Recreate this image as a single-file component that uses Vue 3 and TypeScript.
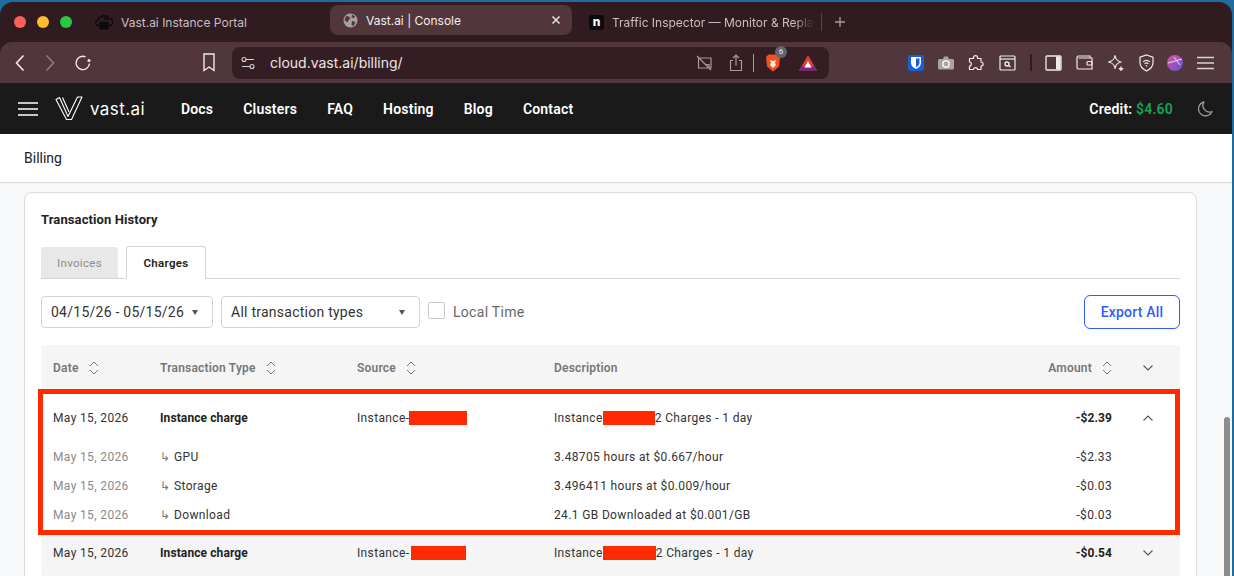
<script setup lang="ts">
const navLinks = ['Docs', 'Clusters', 'FAQ', 'Hosting', 'Blog', 'Contact']

const columns = [
  { label: 'Date', sort: true },
  { label: 'Transaction Type', sort: true },
  { label: 'Source', sort: true },
  { label: 'Description', sort: false },
]

const subRows = [
  { name: 'GPU', text: '3.48705 hours at $0.667/hour', amount: '-$2.33' },
  { name: 'Storage', text: '3.496411 hours at $0.009/hour', amount: '-$0.03' },
  { name: 'Download', text: '24.1 GB Downloaded at $0.001/GB', amount: '-$0.03' },
]
</script>

<template>
  <div class="window">
    <div class="chrome">
      <div class="tabstrip">
        <div class="lights">
          <span class="light red"></span>
          <span class="light yellow"></span>
          <span class="light green"></span>
        </div>
        <div class="tab tab-first">
          <svg width="18" height="16" viewBox="0 0 18 16" fill="none" stroke="#0c0a0b" stroke-width="1.4">
            <path d="M4 11.5H3a2.6 2.6 0 0 1-.3-5.1A4 4 0 0 1 6.3 3 4.8 4.8 0 0 1 14 4.8a3.3 3.3 0 0 1 1 6.7h-1" />
            <circle cx="11.2" cy="3.6" r="1.5" fill="#2f1b20" />
            <path d="M5 8.5h8v6.2H5z" fill="#0c0a0b" />
          </svg>
          <span>Vast.ai Instance Portal</span>
        </div>
        <div class="tab tab-active">
          <svg width="15" height="15" viewBox="0 0 15 15">
            <circle cx="7.5" cy="7.5" r="7" fill="#a7a0a2" />
            <path d="M3 3l3 .5 1.5 2-2 1.5-1 2.5-3-2.500zM9 1.500l3 2-1.500 2L8.500 4zM9 8l3.500 1-2 4-2-1z" fill="#51373b" />
          </svg>
          <span class="tab-title">Vast.ai | Console</span>
          <svg class="tab-close" width="10" height="10" viewBox="0 0 10 10" stroke="#e8e2e3" stroke-width="1.5">
            <path d="M1.500 1.500l7 7M8.500 1.500l-7 7" />
          </svg>
        </div>
        <div class="tab tab-third">
          <span class="notion">n</span>
          <span class="tab-fade">Traffic Inspector — Monitor &amp; Repla</span>
        </div>
        <span class="tab-divider"></span>
        <svg class="tab-plus" width="12" height="12" viewBox="0 0 12 12" stroke="#a89c9f" stroke-width="1.3">
          <path d="M6 1v10M1 6h10" />
        </svg>
      </div>

      <div class="toolbar">
        <div class="tool-left">
          <svg width="12" height="18" viewBox="0 0 12 18" fill="none" stroke="#f0ecec" stroke-width="1.6">
            <path d="M9.500 1.500L2.500 9l7 7.500" />
          </svg>
          <svg width="12" height="18" viewBox="0 0 12 18" fill="none" stroke="#8d7d80" stroke-width="1.6">
            <path d="M2.500 1.500L9.500 9l-7 7.500" />
          </svg>
          <svg width="18" height="18" viewBox="0 0 18 18" fill="none" stroke="#f0ecec" stroke-width="1.4">
            <path d="M15.500 9.500A6.700 6.700 0 1 1 11.500 2.800" />
            <circle cx="15" cy="6.500" r="1.500" fill="#f0ecec" stroke="none" />
          </svg>
        </div>
        <svg class="bookmark" width="12" height="19" viewBox="0 0 12 19" fill="none" stroke="#f0ecec" stroke-width="1.4">
          <path d="M1 1h10v16.500L6 14l-5 3.500z" />
        </svg>
        <div class="urlbar">
          <svg width="14" height="14" viewBox="0 0 14 14" fill="none" stroke="#d8d0d2" stroke-width="1.1">
            <path d="M5 3.500h8M1 10.500h8" />
            <circle cx="3" cy="3.500" r="2" />
            <circle cx="11" cy="10.500" r="2" />
          </svg>
          <span class="url">cloud.vast.ai/billing/</span>
          <div class="url-icons">
            <svg width="16" height="16" viewBox="0 0 16 16" fill="none" stroke="#a69a9c" stroke-width="1.2">
              <path d="M3 3h12v10H2.500V3.500M10 9.500h3V13M1 1l14 14" />
            </svg>
            <svg class="share" width="14" height="18" viewBox="0 0 14 18" fill="none" stroke="#a69a9c" stroke-width="1.2">
              <path d="M4 6.500H1.500v10h11v-10H10M7 11.500V1.500M4 4l3-3 3 3" />
            </svg>
            <span class="url-sep"></span>
            <div class="brave">
              <svg width="14" height="18" viewBox="0 0 14 18">
                <path d="M2.500.5h9L14 3l-1 9.500L7 17.500 1 12.500 0 3z" fill="#f1501f" />
                <path d="M4 6l3 1 3-1-1 3 1 2-3 3-3-3 1-2z" fill="#fbe5dc" />
              </svg>
              <span class="badge">6</span>
            </div>
            <svg width="18" height="16" viewBox="0 0 18 16">
              <path d="M9 0l9 15.500H0z" fill="#e33d2a" />
              <path d="M0 15.500l3-5 3 2 6 0 3-2 3 5z" fill="#6a2b8c" />
              <path d="M9 6l3.500 6.500h-7z" fill="#fff" />
            </svg>
          </div>
        </div>
        <div class="extensions">
          <span class="bitwarden">
            <svg width="10" height="12" viewBox="0 0 10 12">
              <path d="M0 0h10v6c0 3-2.500 4.800-5 6-2.500-1.200-5-3-5-6z" fill="#fff" />
              <path d="M5 1.500h3.500V6c0 2-1.800 3.200-3.500 4.200z" fill="#175ddc" />
            </svg>
          </span>
          <svg width="16" height="14" viewBox="0 0 16 14">
            <path d="M1.500 3H5l1-2.500h4L11 3h3.500A1.500 1.500 0 0 1 16 4.500V12a1.500 1.500 0 0 1-1.500 1.500h-13A1.500 1.500 0 0 1 0 12V4.500A1.500 1.500 0 0 1 1.500 3z" fill="#a9a3a4" />
            <circle cx="8" cy="8" r="3.200" fill="none" stroke="#f5f2f2" stroke-width="1.500" />
          </svg>
          <svg width="18" height="18" viewBox="0 0 18 18" fill="none" stroke="#f0ecec" stroke-width="1.2">
            <path d="M6.500 3.500C6.500 1 10.500 1 10.500 3.500V4.500H14V8c2.800 0 2.800 4 0 4v3.500h-3.500c0-2.500-4-2.500-4 0H2.500V12c2.500 0 2.500-4 0-4V4.500h4z" stroke-linejoin="round" />
          </svg>
          <svg width="17" height="16" viewBox="0 0 17 16" fill="none" stroke="#f0ecec" stroke-width="1.200">
            <rect x="1" y="1" width="15" height="14" rx="1" />
            <path d="M1 4h15" />
            <circle cx="8" cy="9" r="2" stroke-width="1.400" />
            <path d="M9.500 10.500l2 1.500" stroke-width="1.400" />
          </svg>
          <span class="ext-sep"></span>
          <svg class="sidebar" width="17" height="16" viewBox="0 0 17 16">
            <rect x="1" y="1" width="15" height="14" rx="1" fill="#51373b" stroke="#f0ecec" stroke-width="1.300" />
            <rect x="11" y="1.500" width="4.500" height="13" fill="#f0ecec" />
          </svg>
          <svg width="17" height="15" viewBox="0 0 17 15" fill="none" stroke="#f0ecec" stroke-width="1.200">
            <path d="M14 3V1H2.500A1.500 1.500 0 0 0 1 2.500V12.500A1.500 1.500 0 0 0 2.500 14H16V3H2.500" />
            <rect x="11" y="6.500" width="5" height="3.500" rx="1" />
          </svg>
          <svg width="18" height="18" viewBox="0 0 18 18" fill="none" stroke="#f0ecec" stroke-width="1.200">
            <path d="M8 1.500c.6 4 2 5.500 6 6.500-4 1-5.400 2.500-6 6.500C7.400 10.500 6 9 1.500 8 6 7 7.400 5.500 8 1.500z" stroke-linejoin="round" />
            <path d="M14 12.500v4.500M11.800 14.700h4.500" stroke-width="1.400" />
          </svg>
          <svg width="15" height="18" viewBox="0 0 15 18" fill="none" stroke="#f0ecec" stroke-width="1.200">
            <path d="M7.500 1L14 3.200V9c0 3.800-3 6.200-6.500 8C4 15.200 1 12.800 1 9V3.200z" />
            <path d="M4.200 7.800a5 5 0 0 1 6.600 0M5.600 9.700a3 3 0 0 1 3.800 0" />
            <circle cx="7.500" cy="11.800" r=".8" fill="#f0ecec" stroke="none" />
          </svg>
          <svg width="16" height="16" viewBox="0 0 16 16">
            <defs>
              <linearGradient id="avatar" x1="0" y1="0" x2="1" y2="1">
                <stop offset="0" stop-color="#e0529c" />
                <stop offset="1" stop-color="#5a55d8" />
              </linearGradient>
            </defs>
            <circle cx="8" cy="8" r="8" fill="url(#avatar)" />
            <path d="M1 8l14-4M7 2l6 8" stroke="#f6d9e6" stroke-width="1" fill="none" />
          </svg>
          <svg width="17" height="14" viewBox="0 0 17 14" stroke="#d9d2d3" stroke-width="1.400">
            <path d="M0 1.500h17M0 7h17M0 12.500h17" />
          </svg>
        </div>
      </div>
    </div>

    <nav class="topnav">
      <svg class="burger" width="20" height="14" viewBox="0 0 20 14" stroke="#fff" stroke-width="1.600">
        <path d="M0 1h20M0 7h20M0 13h20" />
      </svg>
      <svg class="logo" width="28" height="25" viewBox="0 0 28 25" fill="none" stroke="#fff" stroke-width="1.100">
        <path d="M1 3.500L4.500 1.500 13 20.500 22.500 1 27 1 16.500 23.500H11.500z" stroke-linejoin="round" />
        <path d="M7.500 1.500L14 16" />
      </svg>
      <span class="brand">vast.ai</span>
      <div class="navlinks">
        <a v-for="link in navLinks" :key="link">{{ link }}</a>
      </div>
      <div class="credit">
        Credit: <b>$4.60</b>
      </div>
      <svg class="moon" width="16" height="16" viewBox="0 0 16 16" fill="none" stroke="#9b9b9b" stroke-width="1.300">
        <path d="M7 1a7 7 0 1 0 8 9.500A6.500 6.500 0 0 1 7 1z" stroke-linejoin="round" />
      </svg>
    </nav>

    <div class="page">
      <header class="page-head">Billing</header>
      <main class="content">
        <section class="card">
          <h2>Transaction History</h2>
          <div class="tabs">
            <button class="ctab">Invoices</button>
            <button class="ctab on">Charges</button>
          </div>
          <div class="filters">
            <div class="select date">04/15/26 - 05/15/26<i class="caret"></i></div>
            <div class="select type">All transaction types<i class="caret"></i></div>
            <label class="check"><span class="box"></span>Local Time</label>
            <button class="export">Export All</button>
          </div>

          <div class="table">
            <div class="row head">
              <div v-for="col in columns" :key="col.label" class="cell">
                {{ col.label }}
                <svg v-if="col.sort" class="sort" width="10" height="14" viewBox="0 0 10 14" fill="none" stroke="#777" stroke-width="1">
                  <path d="M1 5l4-4 4 4M1 9l4 4 4-4" />
                </svg>
              </div>
              <div class="cell amount">
                Amount
                <svg class="sort" width="10" height="14" viewBox="0 0 10 14" fill="none" stroke="#777" stroke-width="1">
                  <path d="M1 5l4-4 4 4M1 9l4 4 4-4" />
                </svg>
              </div>
              <div class="cell toggle">
                <svg width="10" height="6" viewBox="0 0 10 6" fill="none" stroke="#555" stroke-width="1.100"><path d="M.5.500L5 5 9.500.500" /></svg>
              </div>
            </div>

            <div class="expanded">
              <div class="row main">
                <div class="cell">May 15, 2026</div>
                <div class="cell strong">Instance charge</div>
                <div class="cell">Instance-<span class="redact src1"></span></div>
                <div class="cell">Instance<span class="redact desc1"></span>2 Charges - 1 day</div>
                <div class="cell amount strong">-$2.39</div>
                <div class="cell toggle">
                  <svg width="10" height="6" viewBox="0 0 10 6" fill="none" stroke="#555" stroke-width="1.100"><path d="M.5 5.500L5 1l4.500 4.500" /></svg>
                </div>
              </div>
              <div v-for="sub in subRows" :key="sub.name" class="row sub">
                <div class="cell muted">May 15, 2026</div>
                <div class="cell"><span class="arrow">↳</span>{{ sub.name }}</div>
                <div class="cell"></div>
                <div class="cell">{{ sub.text }}</div>
                <div class="cell amount">{{ sub.amount }}</div>
                <div class="cell toggle"></div>
              </div>
            </div>

            <div class="row last">
              <div class="cell">May 15, 2026</div>
              <div class="cell strong">Instance charge</div>
              <div class="cell">Instance-<span class="redact src2"></span></div>
              <div class="cell">Instance<span class="redact desc2"></span>2 Charges - 1 day</div>
              <div class="cell amount strong">-$0.54</div>
              <div class="cell toggle">
                <svg width="10" height="6" viewBox="0 0 10 6" fill="none" stroke="#555" stroke-width="1.100"><path d="M.5.500L5 5 9.500.500" /></svg>
              </div>
            </div>

            <div class="highlight"></div>
          </div>
        </section>
      </main>
      <div class="scrollbar"></div>
    </div>
  </div>
</template>

<style scoped>
.window {
  position: relative;
  width: 1232px;
  height: 576px;
  padding-right: 2px;
  overflow: hidden;
  background: #1f6ca3;
  font-family: Roboto, 'Liberation Sans', sans-serif;
}
.chrome {
  margin-top: 2px;
  height: 81px;
  background: #2f1b20;
  border-radius: 13px 13px 0 0;
  width: 1232px;
}
.tabstrip {
  display: flex;
  align-items: center;
  height: 40px;
  font-family: Inter, 'Liberation Sans', sans-serif;
  font-size: 12px;
  color: #c9bfc1;
}
.lights {
  display: flex;
  gap: 11px;
  padding-left: 14px;
  width: 82px;
  box-sizing: border-box;
}
.light {
  width: 12px;
  height: 12px;
  border-radius: 50%;
}
.red { background: #fe5f57; }
.yellow { background: #febc2e; }
.green { background: #28c840; }
.tab {
  display: flex;
  align-items: center;
  gap: 8px;
}
.tab-first {
  margin-left: 13px;
  width: 235px;
}
.tab-active {
  width: 242px;
  height: 30px;
  margin-top: -4px;
  padding: 0 11px 0 13px;
  box-sizing: border-box;
  background: #51373b;
  border-radius: 8px;
  color: #f3eeee;
}
.tab-title { flex: 1; }
.tab-third {
  margin-left: 17px;
  width: 232px;
  overflow: hidden;
}
.notion {
  flex: none;
  width: 15px;
  height: 15px;
  border-radius: 2px;
  background: #0b0b0b;
  color: #fff;
  font-weight: 800;
  font-size: 12px;
  line-height: 14px;
  text-align: center;
}
.tab-fade {
  white-space: nowrap;
  overflow: hidden;
  -webkit-mask-image: linear-gradient(to right, #000 90%, transparent);
  mask-image: linear-gradient(to right, #000 90%, transparent);
}
.tab-divider {
  width: 1px;
  height: 18px;
  background: #5b4448;
}
.tab-plus { margin-left: 12px; }
.toolbar {
  display: flex;
  align-items: center;
  height: 41px;
  background: #51373b;
  border-radius: 12px 12px 0 0;
}
.tool-left {
  display: flex;
  align-items: center;
  gap: 18px;
  padding-left: 14px;
  width: 203px;
  box-sizing: border-box;
}
.bookmark { flex: none; }
.urlbar {
  display: flex;
  align-items: center;
  width: 597px;
  height: 32px;
  margin-left: 17px;
  padding: 0 12px 0 9px;
  box-sizing: border-box;
  background: #351e23;
  border-radius: 8px;
}
.url {
  margin-left: 15px;
  font-family: Inter, 'Liberation Sans', sans-serif;
  font-size: 14px;
  color: #ebe5e6;
}
.url-icons {
  display: flex;
  align-items: center;
  margin-left: auto;
}
.share { margin-left: 17px; }
.url-sep {
  width: 1px;
  height: 18px;
  margin: 0 12px 0 10px;
  background: #a69a9c;
}
.brave {
  position: relative;
  display: flex;
  margin-right: 19px;
}
.badge {
  position: absolute;
  top: -8px;
  left: 9px;
  width: 12px;
  height: 12px;
  border-radius: 50%;
  background: #5f6573;
  color: #e8e8ea;
  font-size: 8px;
  line-height: 12px;
  text-align: center;
}
.extensions {
  display: flex;
  align-items: center;
  justify-content: space-between;
  width: 306px;
  margin-left: 79px;
}
.bitwarden {
  display: flex;
  align-items: center;
  justify-content: center;
  width: 16px;
  height: 16px;
  border-radius: 2px;
  background: #175ddc;
}
.ext-sep {
  width: 2px;
  height: 17px;
  background: #2f1b20;
}
.topnav {
  display: flex;
  align-items: center;
  height: 51px;
  background: #1a1a1a;
  color: #fff;
  width: 1232px;
}
.burger { margin-left: 18px; }
.logo { margin-left: 17px; }
.brand {
  margin-left: 7px;
  font-family: Inter, 'Liberation Sans', sans-serif;
  font-size: 17px;
  letter-spacing: 0.4px;
}
.navlinks {
  display: flex;
  gap: 30px;
  margin-left: 36px;
  font-size: 14px;
  font-weight: 600;
  letter-spacing: 0.2px;
}
.credit {
  margin-left: auto;
  font-size: 14px;
  font-weight: 600;
  letter-spacing: 0.2px;
}
.credit b {
  color: #12a454;
  font-weight: 600;
}
.moon { margin: 0 19px 0 24px; }
.page {
  position: relative;
  width: 1232px;
  height: 442px;
  background: #f7f8fa;
}
.page-head {
  height: 48px;
  padding-left: 24px;
  background: #fff;
  border-bottom: 1px solid #d6d7da;
  font-size: 14px;
  line-height: 48px;
  color: #222;
}
.content {
  padding: 9px 35px 0 24px;
}
.card {
  height: 400px;
  padding: 0 16px;
  background: #fff;
  border: 1px solid #d9dadd;
  border-radius: 8px;
}
h2 {
  margin: 0;
  padding-top: 18px;
  font-size: 13px;
  line-height: 17px;
  font-weight: 700;
  letter-spacing: 0.1px;
  color: #222;
}
.tabs {
  display: flex;
  align-items: flex-end;
  gap: 8px;
  height: 32px;
  margin-top: 18px;
  border-bottom: 1px solid #d4d4d6;
}
.ctab {
  width: 77px;
  height: 31px;
  padding: 0;
  border: 0;
  border-radius: 3px 3px 0 0;
  background: #e8e8e8;
  color: #8b8b8b;
  font: 400 11.5px Roboto, sans-serif;
  letter-spacing: 0.3px;
}
.ctab.on {
  width: 80px;
  height: 33px;
  margin-bottom: -1px;
  border: 1px solid #d4d4d6;
  border-bottom-color: #fff;
  background: #fff;
  color: #222;
  font-weight: 600;
}
.filters {
  display: flex;
  align-items: center;
  gap: 8px;
  height: 34px;
  margin-top: 16px;
}
.select {
  display: flex;
  align-items: center;
  justify-content: space-between;
  height: 32px;
  padding: 0 14px 0 9px;
  box-sizing: border-box;
  border: 1px solid #d4d4d6;
  border-radius: 4px;
  font-size: 14px;
  letter-spacing: 0.25px;
  color: #333;
}
.date { width: 172px; }
.type { width: 199px; }
.caret {
  width: 0;
  height: 0;
  border: 3px solid transparent;
  border-top: 5px solid #555;
  border-bottom: 0;
}
.check {
  display: flex;
  align-items: center;
  gap: 8px;
  font-size: 14px;
  letter-spacing: 0.3px;
  color: #666;
}
.box {
  width: 15px;
  height: 15px;
  margin-top: -3px;
  border: 1px solid #c9c9cb;
  border-radius: 2px;
}
.export {
  width: 96px;
  height: 34px;
  margin-left: auto;
  border: 1px solid #2f5cff;
  border-radius: 6px;
  background: #fff;
  color: #2f5cff;
  font: 500 14px Roboto, sans-serif;
  letter-spacing: 0.2px;
}
.table {
  position: relative;
  margin-top: 16px;
  padding-bottom: 4px;
  background: #f5f5f5;
  border-radius: 4px;
  font-size: 12px;
  letter-spacing: 0.36px;
  color: #333;
}
.row {
  display: grid;
  grid-template-columns: 107px 197px 197px 1fr 112px 32px;
  align-items: center;
  padding: 0 16px 0 12px;
}
.head {
  height: 46px;
  color: #777;
  font-weight: 600;
  letter-spacing: 0.2px;
}
.expanded {
  padding: 3px 0 5px;
  background: #fff;
}
.main { height: 48px; }
.sub { height: 29px; }
.last { height: 38px; }
.cell {
  white-space: nowrap;
}
.head .cell {
  display: flex;
  align-items: center;
  gap: 10px;
}
.strong {
  font-weight: 700;
  letter-spacing: 0.1px;
  color: #222;
}
.muted { color: #8a8a8a; }
.amount {
  justify-content: flex-end;
  padding-right: 20px;
  text-align: right;
}
.toggle {
  display: flex;
  justify-content: center;
}
.arrow {
  display: inline-block;
  width: 14px;
  color: #777;
}
.redact {
  display: inline-block;
  height: 14px;
  background: #ff2a00;
  vertical-align: -3px;
}
.src1 { width: 58px; }
.src2 { width: 55px; margin-left: 2px; }
.desc1 { width: 52px; }
.desc2 { width: 53px; }
.highlight {
  position: absolute;
  top: 44px;
  left: -3px;
  width: 1142px;
  height: 146px;
  box-sizing: border-box;
  border: 5px solid #ff2a00;
}
.scrollbar {
  position: absolute;
  top: 283px;
  right: 2px;
  width: 6px;
  height: 170px;
  border-radius: 3px;
  background: #8c8c8c;
}
</style>
